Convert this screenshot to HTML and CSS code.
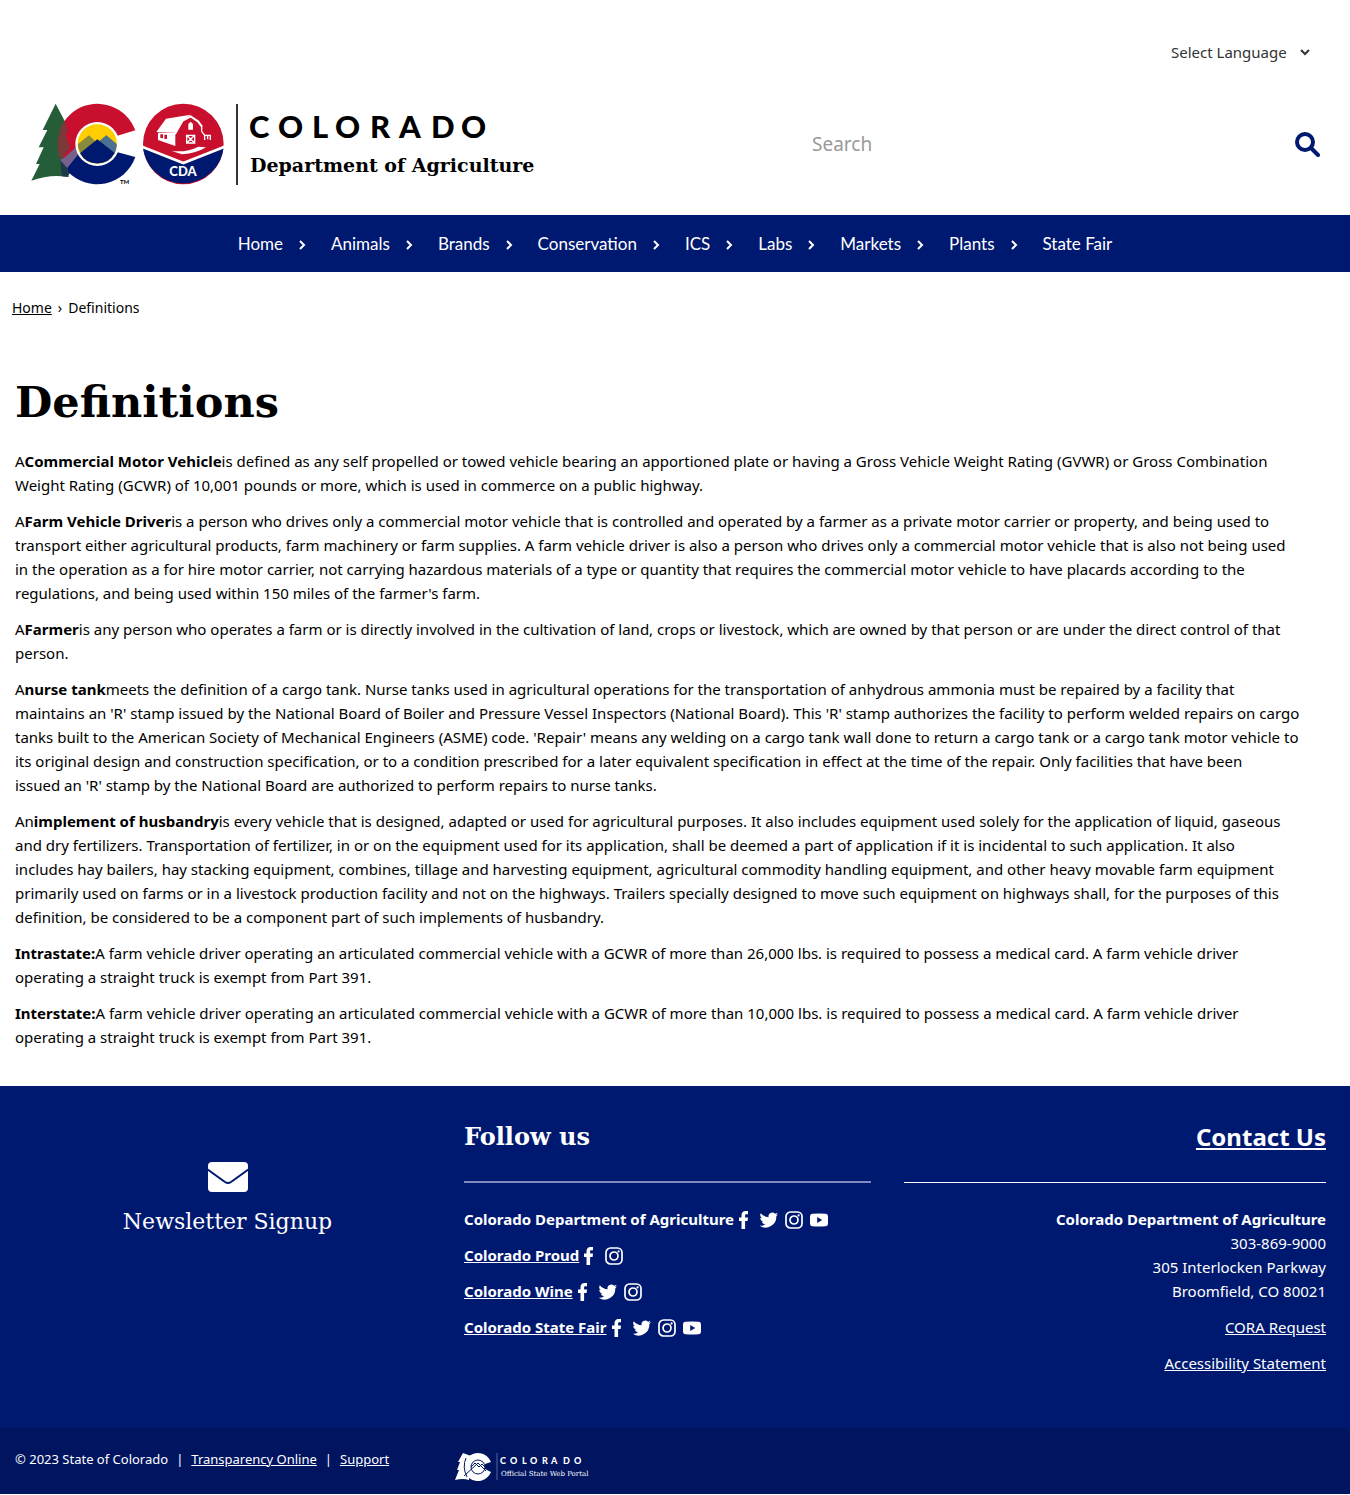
FILE: index.html
```html
<!DOCTYPE html>
<html lang="en">
<head>
<meta charset="utf-8">
<meta name="viewport" content="width=device-width, initial-scale=1">
<title>Definitions | Department of Agriculture</title>
<link rel="stylesheet" href="styles.css">
</head>
<body>
<svg class="sprite" aria-hidden="true">
  <symbol id="chevron" viewBox="0 0 10 10"><path d="M3 1l4 4-4 4" fill="none" stroke="currentColor" stroke-width="2"/></symbol>
  <symbol id="facebook" viewBox="0 0 20 20"><path d="M7.500 19v-8H5V7.600h2.500V5.500C7.500 2.600 9 1 11.500 1H14v3.300h-1.500c-1 0-1.400.5-1.400 1.400v1.900H14l-.4 3.400h-2.500v8z" fill="currentColor"/></symbol>
  <symbol id="twitter" viewBox="-1 -1 26 26"><path d="M23.600 4.600a9.700 9.700 0 0 1-2.800.8 4.900 4.900 0 0 0 2.200-2.700 9.700 9.700 0 0 1-3.100 1.200 4.900 4.900 0 0 0-8.400 4.500A13.900 13.900 0 0 1 1.400 3.200a4.900 4.900 0 0 0 1.500 6.500 4.900 4.900 0 0 1-2.200-.6v.1a4.900 4.900 0 0 0 3.900 4.800 4.900 4.900 0 0 1-2.200.1 4.900 4.900 0 0 0 4.600 3.400A9.900 9.900 0 0 1 0 19.500 13.900 13.900 0 0 0 21.500 7.100a10 10 0 0 0 2.100-2.500z" fill="currentColor"/></symbol>
  <symbol id="instagram" viewBox="0 0 20 20"><rect x="2" y="2" width="16" height="16" rx="4.500" fill="none" stroke="currentColor" stroke-width="1.700"/><circle cx="10" cy="10" r="4" fill="none" stroke="currentColor" stroke-width="1.700"/><circle cx="14.600" cy="5.400" r="1.100" fill="currentColor"/></symbol>
  <symbol id="youtube" viewBox="0 0 20 20"><path fill-rule="evenodd" d="M3.500 3.800Q10 3.200 16.500 3.800 19 4 19 6.800v6.400q0 2.800-2.500 3-6.500.6-13 0Q1 16 1 13.200V6.800Q1 4 3.500 3.800zM8.200 7v6l5-3z" fill="currentColor"/></symbol>
</svg>

<header class="header">
  <div class="language">
    <select class="language-select" aria-label="Language"><option>Select Language</option></select>
    <svg class="language-arrow" viewBox="0 0 10 10" aria-hidden="true"><path d="M1 3l4 4 4-4" fill="none" stroke="currentColor" stroke-width="2"/></svg>
  </div>
  <div class="brand-row">
    <a href="#" class="logo" aria-label="Colorado Department of Agriculture">
      <svg width="510" height="90" viewBox="30 99 510 90">
        <g transform="translate(20 90) scale(.3333)">
          <path fill="#c8102e" d="M346 121A121 121 0 1 0 142 243L232 162L290 138z"/>
          <path fill="#245d38" d="M107 41L68 120H82L56 172H71L48 222H59L34 272Q88 252 140 260L150 250L124 190L118 145L134 93z"/>
          <path fill="#7b3a3a" d="M122 110L134 93L142 118L136 135L150 172L132 198L120 208Q104 165 122 110z"/>
          <path fill="#76628c" d="M132 204L172 168L232 162L142 243Q128 228 120 210z"/>
          <path fill="#001970" d="M142 234L180 186L290 186L346 201A121 121 0 0 1 142 243z"/>
          <path fill="#1d3a4b" d="M120 210L142 234L148 250Q144 256 146 261L126 259z"/>
          <circle cx="232" cy="162" r="66" fill="#fff"/>
          <circle cx="232" cy="162" r="59" fill="#ffcd00"/>
          <path fill="#8a8a3c" d="M174 162L207 136L232 160L259 136L290 164A59 59 0 0 1 174 170z"/>
          <path fill="#4d7191" d="M232 158L259 136L290 162A59 59 0 0 1 283 192z"/>
          <path fill="#001970" d="M180 190L232 148L284 189A59 59 0 0 1 180 190z"/>
          <circle cx="490" cy="162" r="121" fill="#c8102e"/>
          <path fill="#001970" d="M369 174L490 223L611 174A122 122 0 0 1 369 174z"/>
          <path fill="none" stroke="#fff" stroke-width="8" d="M366 170L490 219L614 170"/>
          <path fill="#fff" d="M409 126L438 86L512 74L488 92L466 128z"/>
          <path fill="none" stroke="#fff" stroke-width="6" d="M465 132L487 93L512 79L534 94L546 110"/>
          <path fill="#fff" d="M414 128H466V168L414 150z"/>
          <path fill="#c8102e" d="M421 133H429V145L421 144zM433 134H441V147L433 146z"/>
          <path fill="#fff" d="M505 102L512 95L519 102V119H505z"/>
          <path fill="none" stroke="#fff" stroke-width="4" d="M500 136H524V159H500zL524 159M524 136L500 159M545 108V124L554 136V150M552 136H571V150M563 136V148"/>
          <path fill="#fff" d="M455 183Q500 188 535 170L558 172Q530 190 486 193z"/>
        </g>
        <text class="logo-cda" x="183" y="176" text-anchor="middle">CDA</text>
        <text class="logo-tm" x="120" y="184">TM</text>
        <path d="M237 104V185" stroke="#333" stroke-width="2"/>
        <text class="logo-state" y="138" x="249 278 312 335 370 399 431 461">COLORADO</text>
        <text class="logo-dept" x="250" y="172">Department of Agriculture</text>
      </svg>
    </a>
    <form class="search" role="search">
      <input class="search-input" type="search" aria-label="Search" placeholder="Search">
      <button class="search-button" type="submit" aria-label="Submit search">
        <svg width="26" height="26" viewBox="0 0 26 26"><circle cx="11" cy="11" r="8" fill="none" stroke="currentColor" stroke-width="4"/><path d="M17 17l7 7" stroke="currentColor" stroke-width="4" stroke-linecap="round"/></svg>
      </button>
    </form>
  </div>
</header>

<nav class="menu" aria-label="Main">
  <ul class="menu-list">
    <li class="menu-item"><a href="#">Home</a><svg class="menu-arrow"><use href="#chevron"/></svg></li>
    <li class="menu-item"><a href="#">Animals</a><svg class="menu-arrow"><use href="#chevron"/></svg></li>
    <li class="menu-item"><a href="#">Brands</a><svg class="menu-arrow"><use href="#chevron"/></svg></li>
    <li class="menu-item"><a href="#">Conservation</a><svg class="menu-arrow"><use href="#chevron"/></svg></li>
    <li class="menu-item"><a href="#">ICS</a><svg class="menu-arrow"><use href="#chevron"/></svg></li>
    <li class="menu-item"><a href="#">Labs</a><svg class="menu-arrow"><use href="#chevron"/></svg></li>
    <li class="menu-item"><a href="#">Markets</a><svg class="menu-arrow"><use href="#chevron"/></svg></li>
    <li class="menu-item"><a href="#">Plants</a><svg class="menu-arrow"><use href="#chevron"/></svg></li>
    <li class="menu-item"><a href="#">State Fair</a></li>
  </ul>
</nav>

<nav class="breadcrumb" aria-label="Breadcrumb"><a href="#">Home</a><span>›</span><span>Definitions</span></nav>

<main class="content">
  <h1>Definitions</h1>
  <p>A<strong>Commercial Motor Vehicle</strong>is defined as any self propelled or towed vehicle bearing an apportioned plate or having a Gross Vehicle Weight Rating (GVWR) or Gross Combination <br>Weight Rating (GCWR) of 10,001 pounds or more, which is used in commerce on a public highway.</p>
  <p>A<strong>Farm Vehicle Driver</strong>is a person who drives only a commercial motor vehicle that is controlled and operated by a farmer as a private motor carrier or property, and being used to <br>transport either agricultural products, farm machinery or farm supplies. A farm vehicle driver is also a person who drives only a commercial motor vehicle that is also not being used <br>in the operation as a for hire motor carrier, not carrying hazardous materials of a type or quantity that requires the commercial motor vehicle to have placards according to the <br>regulations, and being used within 150 miles of the farmer's farm.</p>
  <p>A<strong>Farmer</strong>is any person who operates a farm or is directly involved in the cultivation of land, crops or livestock, which are owned by that person or are under the direct control of that <br>person.</p>
  <p>A<strong>nurse tank</strong>meets the definition of a cargo tank. Nurse tanks used in agricultural operations for the transportation of anhydrous ammonia must be repaired by a facility that <br>maintains an 'R' stamp issued by the National Board of Boiler and Pressure Vessel Inspectors (National Board). This 'R' stamp authorizes the facility to perform welded repairs on cargo <br>tanks built to the American Society of Mechanical Engineers (ASME) code. 'Repair' means any welding on a cargo tank wall done to return a cargo tank or a cargo tank motor vehicle to <br>its original design and construction specification, or to a condition prescribed for a later equivalent specification in effect at the time of the repair. Only facilities that have been <br>issued an 'R' stamp by the National Board are authorized to perform repairs to nurse tanks.</p>
  <p>An<strong>implement of husbandry</strong>is every vehicle that is designed, adapted or used for agricultural purposes. It also includes equipment used solely for the application of liquid, gaseous <br>and dry fertilizers. Transportation of fertilizer, in or on the equipment used for its application, shall be deemed a part of application if it is incidental to such application. It also <br>includes hay bailers, hay stacking equipment, combines, tillage and harvesting equipment, agricultural commodity handling equipment, and other heavy movable farm equipment <br>primarily used on farms or in a livestock production facility and not on the highways. Trailers specially designed to move such equipment on highways shall, for the purposes of this <br>definition, be considered to be a component part of such implements of husbandry.</p>
  <p><strong>Intrastate:</strong>A farm vehicle driver operating an articulated commercial vehicle with a GCWR of more than 26,000 lbs. is required to possess a medical card. A farm vehicle driver <br>operating a straight truck is exempt from Part 391.</p>
  <p><strong>Interstate:</strong>A farm vehicle driver operating an articulated commercial vehicle with a GCWR of more than 10,000 lbs. is required to possess a medical card. A farm vehicle driver <br>operating a straight truck is exempt from Part 391.</p>
</main>

<footer>
  <div class="footer-main">
    <a href="#" class="newsletter">
      <svg width="42" height="32" viewBox="0 0 42 32" aria-hidden="true"><rect x="1" y="1" width="40" height="30" rx="4" fill="#fff"/><path d="M0 8L18 21q3 2 6 0L42 8" fill="none" stroke="#001970" stroke-width="2"/></svg>
      <span>Newsletter Signup</span>
    </a>
    <section class="follow">
      <h2>Follow us</h2>
      <ul class="follow-list">
        <li class="follow-item"><strong>Colorado Department of Agriculture</strong>
          <span class="socials"><a href="#" aria-label="Facebook"><svg><use href="#facebook"/></svg></a><a href="#" aria-label="Twitter"><svg><use href="#twitter"/></svg></a><a href="#" aria-label="Instagram"><svg><use href="#instagram"/></svg></a><a href="#" aria-label="YouTube"><svg><use href="#youtube"/></svg></a></span></li>
        <li class="follow-item"><a href="#"><strong>Colorado Proud</strong></a>
          <span class="socials"><a href="#" aria-label="Facebook"><svg><use href="#facebook"/></svg></a><a href="#" aria-label="Instagram"><svg><use href="#instagram"/></svg></a></span></li>
        <li class="follow-item"><a href="#"><strong>Colorado Wine</strong></a>
          <span class="socials"><a href="#" aria-label="Facebook"><svg><use href="#facebook"/></svg></a><a href="#" aria-label="Twitter"><svg><use href="#twitter"/></svg></a><a href="#" aria-label="Instagram"><svg><use href="#instagram"/></svg></a></span></li>
        <li class="follow-item"><a href="#"><strong>Colorado State Fair</strong></a>
          <span class="socials"><a href="#" aria-label="Facebook"><svg><use href="#facebook"/></svg></a><a href="#" aria-label="Twitter"><svg><use href="#twitter"/></svg></a><a href="#" aria-label="Instagram"><svg><use href="#instagram"/></svg></a><a href="#" aria-label="YouTube"><svg><use href="#youtube"/></svg></a></span></li>
      </ul>
    </section>
    <section class="contact">
      <h2><a href="#">Contact Us</a></h2>
      <address><strong>Colorado Department of Agriculture</strong><br>303-869-9000<br>305 Interlocken Parkway<br>Broomfield, CO 80021</address>
      <p><a href="#">CORA Request</a></p>
      <p><a href="#">Accessibility Statement</a></p>
    </section>
  </div>
  <div class="footer-bar">
    <p class="legal"><span>© 2023 State of Colorado</span><span>|</span><a href="#">Transparency Online</a><span>|</span><a href="#">Support</a></p>
    <a href="#" class="portal" aria-label="Colorado Official State Web Portal">
      <svg width="138" height="30" viewBox="0 0 138 30">
        <path fill="#fff" d="M8 1L3 10H5L2 18H4L0 28Q8 26 14 28L16 4z"/>
        <path fill="#fff" d="M36 10A14 14 0 1 0 36 20L30 17V12z"/>
        <circle cx="23" cy="15" r="7" fill="none" stroke="#001460"/>
        <path fill="none" stroke="#001460" d="M9 24L23 11L31 19M16 15L20 11L24 15L27 12L30 15M11 6Q7 15 12 25"/>
        <path d="M42 1V28" stroke="#56639f"/>
        <text class="portal-state" y="12" x="45 55 67 75 87 96 108 119">COLORADO</text>
        <text class="portal-name" x="46" y="24">Official State Web Portal</text>
      </svg>
    </a>
  </div>
</footer>
</body>
</html>
```
FILE: styles.css
```css
* { box-sizing: border-box; }

body {
  margin: 0;
  background: #fff;
  color: #000;
  font: 15px/24px "Noto Sans", "Open Sans", sans-serif;
}

h1, h2, .newsletter, .logo-dept, .portal-name {
  font-family: "DejaVu Serif", serif;
}

p, ul, h1, h2 { margin: 0; }
ul { padding: 0; list-style: none; }
a { color: inherit; }

.sprite { display: none; }

/* Header */
.header { padding: 36px 30px 26px; }

.language {
  display: flex;
  align-items: center;
  justify-content: flex-end;
  gap: 13px;
  height: 32px;
  padding-right: 10px;
  color: #333;
}

.language-select {
  appearance: none;
  margin: 0;
  padding: 0;
  border: 0;
  background: none;
  color: inherit;
  font: inherit;
}

.language-arrow { width: 10px; height: 10px; }

.brand-row {
  display: flex;
  align-items: center;
  justify-content: space-between;
  margin-top: 31px;
}

.logo, .logo svg, .portal svg { display: block; }
.logo-state { font: 900 31px "Lato", sans-serif; }
.logo-dept { font-size: 19px; font-weight: 700; }
.logo-cda { font: 900 13px "Lato", sans-serif; fill: #fff; }
.logo-tm { font: 700 6px "Lato", sans-serif; }

.search {
  display: flex;
  align-items: center;
  width: 40%;
  max-width: 508px;
}

.search-input {
  flex: 1;
  min-width: 0;
  height: 40px;
  padding: 0;
  border: 0;
  background: none;
  color: #333;
  font: inherit;
  font-size: 19px;
}

.search-input::placeholder { color: #999; }

.search-button {
  display: flex;
  padding: 0;
  border: 0;
  background: none;
  color: #001970;
}

/* Main menu */
.menu { background: #001970; color: #fff; }

.menu-list {
  display: flex;
  flex-wrap: wrap;
  justify-content: center;
}

.menu-item {
  display: flex;
  align-items: center;
  height: 57px;
  font-family: "Lato", sans-serif;
  font-size: 17px;
}

.menu-item a { text-decoration: none; }

.menu-arrow {
  width: 10px;
  height: 10px;
  margin: 2px 24px 0 14px;
}

/* Content */
.breadcrumb {
  display: flex;
  gap: 6px;
  padding: 26px 12px 0;
  font-size: 14px;
  line-height: 20px;
}

.content { padding: 55px 15px 37px; }

h1 {
  margin-bottom: 18px;
  font-size: 43px;
  line-height: 58px;
}

.content p + p { margin-top: 12px; }

/* Footer */
.footer-main {
  display: grid;
  grid-template-columns: 464fr 407fr 455fr;
  min-height: 342px;
  padding: 32px 24px 52px 0;
  background: #001970;
  color: #fff;
}

.newsletter {
  display: flex;
  flex-direction: column;
  align-items: center;
  gap: 14px;
  padding: 43px 9px 0 0;
  font-size: 22px;
  line-height: 30px;
  text-decoration: none;
}

h2 {
  height: 65px;
  margin-bottom: 24px;
  font-size: 24px;
  line-height: 38px;
}

.follow h2 { border-bottom: 2px solid #7f8bc0; }

.follow-list { display: grid; gap: 12px; }
.follow-item { display: flex; }

.socials {
  display: flex;
  gap: 5px;
  padding-top: 3px;
}

.socials svg {
  display: block;
  width: 20px;
  height: 20px;
}

.contact { padding-left: 33px; text-align: right; }

.contact h2 {
  border-bottom: 1px solid #fff;
  font-family: "Noto Sans", sans-serif;
}

address { font-style: normal; }
.contact p { margin-top: 12px; }

.footer-bar {
  display: flex;
  align-items: center;
  height: 66px;
  padding: 0 15px;
  background: #001460;
  color: #fff;
  font-size: 13px;
}

.legal {
  display: flex;
  gap: 8px;
  width: 440px;
  padding-bottom: 5px;
}

.portal { margin-top: 12px; }
.portal-state { font: 900 9px "Lato", sans-serif; fill: #fff; }
.portal-name { font-size: 7px; fill: #fff; }

@media (max-width: 1300px) {
  .content br { display: none; }
}

@media (max-width: 900px) {
  .brand-row, .footer-main, .footer-bar { display: block; height: auto; }
  .logo svg { width: 100%; }
  .search { width: 100%; }
}
```
